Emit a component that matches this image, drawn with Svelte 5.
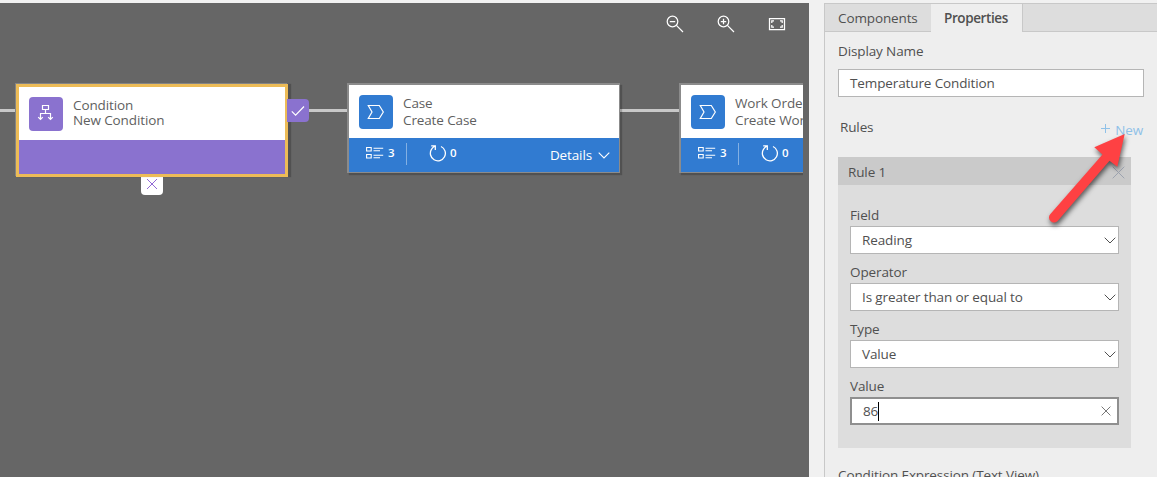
<script>
  const fields = [
    { label: 'Field', value: 'Reading' },
    { label: 'Operator', value: 'Is greater than or equal to' },
    { label: 'Type', value: 'Value' }
  ];
  const steps = [
    { x: 347, title: 'Case', name: 'Create Case', details: true },
    { x: 679, title: 'Work Order', name: 'Create Work Order', details: false }
  ];
</script>

{#snippet chevron()}
  <svg class="chev" width="12" height="7" viewBox="0 0 12 7"><path d="M.7 .7L6 6L11.3 .7" /></svg>
{/snippet}

<div class="page">
  <main class="canvas">
    <div class="tools">
      <svg width="18" height="18" viewBox="0 0 18 18"><circle cx="6.5" cy="6.5" r="5.3" /><path d="M10.4 10.4L17 17M3.8 6.5H9.2" /></svg>
      <svg width="18" height="18" viewBox="0 0 18 18"><circle cx="6.5" cy="6.5" r="5.3" /><path d="M10.4 10.4L17 17M3.8 6.5H9.2M6.5 3.8V9.2" /></svg>
      <svg width="18" height="18" viewBox="0 0 18 18"><path d="M1.5 3.5H16.5V14.5H1.5ZM3.8 8V5.8H6M12 5.8H14.2V8M14.2 10V12.2H12M6 12.2H3.8V10" /></svg>
    </div>
    <div class="flow">
      <div class="wire"></div>
      <section class="node condition">
        <div class="head">
          <div class="icon">
            <svg width="18" height="18" viewBox="0 0 18 18"><path d="M5.5 1.5H11.5V5.5H5.5ZM8.5 5.5V9.5M3.5 15.5V9.5H13.5V15.5M1.2 13.2L3.5 15.5L5.8 13.2M11.2 13.2L13.5 15.5L15.8 13.2" /></svg>
          </div>
          <div class="titles"><div>Condition</div><div>New Condition</div></div>
        </div>
      </section>
      <div class="yes"><svg width="14" height="12" viewBox="0 0 14 12"><path d="M.8 6.3L4.6 10.1L13 1.5" /></svg></div>
      <div class="no"><svg width="12" height="12" viewBox="0 0 12 12"><path d="M1 1L11 11M11 1L1 11" /></svg></div>
      {#each steps as s}
        <section class="node step" style="left:{s.x}px">
          <div class="head">
            <div class="icon">
              <svg width="18" height="16" viewBox="0 0 18 16"><path d="M1.3 1.5H12.3L16.3 8L12.3 14.5H1.3L5 8Z" /></svg>
            </div>
            <div class="titles"><div>{s.title}</div><div>{s.name}</div></div>
          </div>
          <div class="foot">
            <svg class="list" width="18" height="13" viewBox="0 0 18 13"><path d="M.6 1.5H5.2V5H.6ZM.6 8.5H5.2V12H.6ZM7.5 2.2H17.2M7.5 4.7H14M7.5 9.2H17.2M7.5 11.7H14" /></svg>
            <b>3</b>
            <i></i>
            <svg class="loop" width="18" height="18" viewBox="0 0 18 18"><path d="M12 2.5A7.5 7.5 0 1 1 2.6 5.2Q3.5 3.7 5.6 2.3M2.2 1.9H6.3V6" /></svg>
            <b>0</b>
            {#if s.details}<span class="details">Details {@render chevron()}</span>{/if}
          </div>
        </section>
      {/each}
    </div>
  </main>

  <aside class="panel">
    <nav><div class="tab">Components</div><div class="tab active">Properties</div><div class="rest"></div></nav>
    <div class="body">
      <div class="label first">Display Name</div>
      <div class="box">Temperature Condition</div>
      <div class="rules"><span>Rules</span>
        <span class="new"><svg width="9" height="9" viewBox="0 0 9 9"><path d="M4.5 0V9M0 4.5H9" /></svg>New</span>
      </div>
      <div class="rule">
        <header><span>Rule 1</span><svg width="13" height="13" viewBox="0 0 13 13"><path d="M.7 .7L12.3 12.3M12.3 .7L.7 12.3" /></svg></header>
        <div class="fields">
          {#each fields as f}
            <div class="label">{f.label}</div>
            <div class="box">{f.value}{@render chevron()}</div>
          {/each}
          <div class="label">Value</div>
          <div class="box focus"><span>86</span><em></em><svg class="clear" width="10" height="10" viewBox="0 0 10 10"><path d="M.6 .6L9.4 9.4M9.4 .6L.6 9.4" /></svg></div>
        </div>
      </div>
      <div class="label expr">Condition Expression (Text View)</div>
    </div>
  </aside>

  <svg class="pointer" width="1157" height="477" viewBox="0 0 1157 477">
    <path d="M1124.7 134L1094.3 147.3L1102.5 154.4L1050.2 214.2A5 5 0 0 0 1057.8 220.8L1109.5 160.7L1117.3 166.7Z" />
  </svg>
</div>

<style>
  :global(body) { margin: 0; overflow: hidden; }
  .page { position: relative; box-sizing: border-box; width: 1157px; height: 477px; padding-top: 3px; display: flex; gap: 15px; overflow: hidden; background: #f1f1f1; color: #505050; font: 13.5px/16px "Open Sans", "Noto Sans", sans-serif; letter-spacing: -.12px; white-space: nowrap; }
  svg { display: block; fill: none; flex: none; }
  .canvas { position: relative; width: 809px; flex: none; background: #666; }
  .tools { display: flex; gap: 33px; justify-content: flex-end; padding: 12px 23px 0 0; stroke: #fff; stroke-width: 1.25; }
  .flow { position: absolute; left: 0; top: 0; width: 803px; height: 474px; overflow: hidden; }
  .wire { position: absolute; left: 0; top: 106px; width: 690px; height: 3px; background: #c8c8c8; }
  .node { position: absolute; box-sizing: border-box; background: #fff; color: #5f5f5f; box-shadow: 2px 2px 1px rgba(0, 0, 0, .2); }
  .condition { left: 16px; top: 81px; width: 272px; height: 93px; border: 3px solid #edbc57; background: linear-gradient(#fff 53px, #8a72cf 53px); background-origin: padding-box; box-shadow: -1px -1px 0 #858585, 3px 0 1px rgba(0, 0, 0, .2); z-index: 2; }
  .step { top: 80px; width: 273px; height: 90px; border: 2px solid #8b8b8b; border-width: 2px 1px 1px 2px; }
  .head { display: flex; box-sizing: border-box; height: 53px; padding: 10px 0 0 10px; gap: 10px; }
  .icon { width: 34px; height: 34px; border-radius: 4px; display: flex; align-items: center; justify-content: center; background: #317bd1; stroke: #fff; stroke-width: 1.2; flex: none; }
  .condition .icon { background: #8a72cf; }
  .condition .icon svg { margin: -3px 1px 0 0; }
  .titles { line-height: 17px; margin-top: -.5px; }
  .titles div + div { margin-top: .5px; }
  .condition .titles { line-height: 16px; margin-top: 0; }
  .condition .titles div + div { margin-top: -.6px; }
  .foot { display: flex; align-items: flex-start; box-sizing: border-box; height: 34px; padding-left: 17px; background: #317bd1; color: #fff; }
  .foot svg { stroke: #fff; stroke-width: 1.1; }
  .foot b { font-size: 11.5px; font-weight: 600; margin-top: 7px; width: 8px; }
  .list { margin: 8px 4px 0 0; }
  .foot i { width: 1px; height: 22px; margin: 5px 22px 0 10px; background: #83b0e3; }
  .foot .loop { margin: 6px 3px 0 0; stroke-width: 1.3; }
  .details { display: flex; align-items: center; gap: 6px; margin: 9px 9px 0 auto; }
  .chev { stroke: #505050; stroke-width: 1; }
  .yes { position: absolute; left: 287px; top: 96px; width: 22px; height: 23px; border-radius: 0 4px 4px 0; background: #8a72cf; stroke: #fff; stroke-width: 1.2; display: flex; align-items: center; justify-content: center; z-index: 3; }
  .no { position: absolute; left: 141px; top: 172px; width: 22px; height: 20px; border-radius: 0 0 4px 4px; background: #fff; stroke: #9269d6; stroke-width: 1; display: flex; align-items: center; justify-content: center; z-index: 1; }
  .no svg { margin-top: -2px; }
  .panel { box-sizing: border-box; width: 333px; flex: none; border: 1px solid #c8c8c8; border-width: 1px 0 0 1px; background: #eee; }
  nav { display: flex; height: 28px; line-height: 28px; }
  .tab { box-sizing: border-box; width: 106px; padding-left: 13px; background: #ddd; border-bottom: 1px solid #c8c8c8; }
  .active { width: 92px; background: #eee; border-right: 1px solid #c8c8c8; border-bottom: 0; font-weight: 600; letter-spacing: -.4px; }
  .rest { flex: 1; background: #ddd; border-bottom: 1px solid #c8c8c8; }
  .body { padding: 0 13px; }
  .first { margin-top: 11px; }
  .box { display: flex; align-items: center; justify-content: space-between; box-sizing: border-box; height: 28px; padding: 0 2px 0 11px; border: 1px solid #b5b5b5; background: #fff; }
  .first + .box { margin-top: 10px; }
  .rules { display: flex; justify-content: space-between; height: 38px; margin-top: 22px; padding: 0 1px 0 2px; }
  .new { display: flex; align-items: flex-start; gap: 5px; margin-top: 3px; color: #8fc1e8; stroke-width: 1; }
  .new svg { margin-top: 2px; stroke: #8fc1e8; }
  .rule { width: 293px; height: 291px; background: #ddd; }
  header { display: flex; align-items: center; justify-content: space-between; height: 28px; padding: 2px 6px 0 10px; box-sizing: border-box; background: #cacaca; }
  header svg { stroke: #9da3b0; }
  .fields { padding: 22px 12px 0; }
  .fields .label { height: 19px; }
  .fields .box { margin-bottom: 10px; }
  .fields .box.focus { border: 2px solid #8f8f8f; justify-content: flex-start; padding-right: 6px; }
  .focus em { width: 1px; height: 19px; background: #000; }
  .clear { margin-left: auto; stroke: #777; }
  .expr { margin-top: 19px; }
  .foot .chev { stroke: #fff; }
  .pointer { position: absolute; left: 0; top: 0; fill: #fe4143; filter: drop-shadow(1px 3px 2.5px rgba(0, 0, 0, .6)); pointer-events: none; z-index: 5; }
</style>
